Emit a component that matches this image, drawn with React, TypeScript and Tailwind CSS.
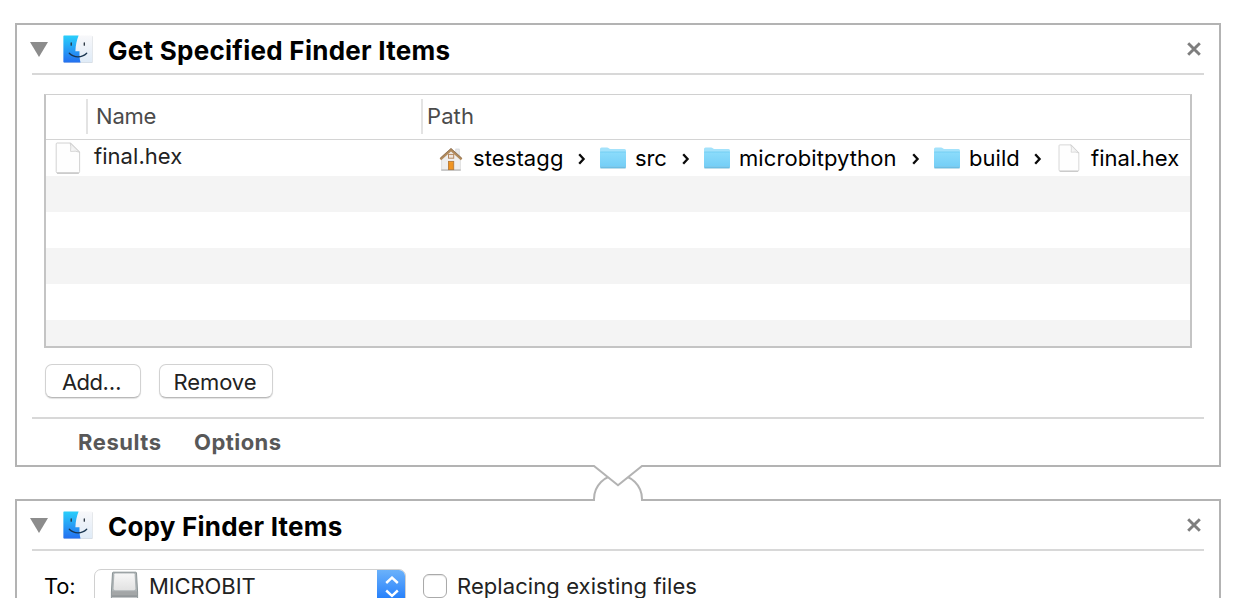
import React from "react";

function FinderIcon() {
  return (
    <svg className="block h-[30px] w-[31px] shrink-0" viewBox="0 0 31 30">
      <defs>
        <linearGradient id="finderBlue" x1="0" y1="0" x2="0" y2="1">
          <stop offset="0" stopColor="#29cffb" />
          <stop offset="1" stopColor="#2470f0" />
        </linearGradient>
        <linearGradient id="finderWhite" x1="0" y1="0" x2="0" y2="1">
          <stop offset="0" stopColor="#f8f8fa" />
          <stop offset="1" stopColor="#dfebf7" />
        </linearGradient>
      </defs>
      <rect x="0.8" y="1" width="28.8" height="27" rx="0.8" fill="#cfd3d8" />
      <rect x="0.6" y="0.4" width="28.6" height="27" rx="0.6" fill="url(#finderWhite)" />
      <path d="M1 0.4H15.6C13.8 5 12.6 10 12.4 16.2H16.5C16.4 20.3 16.6 24 17.5 27.4H1Q0.4 27.4 0.4 26.8V1Q0.4 0.4 1 0.4Z" fill="url(#finderBlue)" />
      <path d="M8.2 8V10.2M21.3 8V10.2" stroke="#25313d" strokeWidth="1.3" strokeLinecap="round" />
      <path d="M6.3 18.2Q10 21.8 15 21.8Q20 21.8 23.7 18.2" fill="none" stroke="#18344e" strokeWidth="1.3" strokeLinecap="round" />
    </svg>
  );
}

function FolderIcon() {
  return (
    <svg className="block h-[24px] w-[28px] shrink-0" viewBox="0 0 28 24">
      <defs>
        <linearGradient id="folderFront" x1="0" y1="0" x2="0" y2="1">
          <stop offset="0" stopColor="#8cdcfb" />
          <stop offset="1" stopColor="#72cdf6" />
        </linearGradient>
      </defs>
      <path d="M1 4Q1 2.5 2.5 2.5H8Q9.2 2.5 9.8 3.3Q10.3 4 11.5 4H25.5Q27 4 27 5.5V20H1Z" fill="#a3e2fb" />
      <path d="M1 7H27V22Q27 23 26 23H2Q1 23 1 22Z" fill="url(#folderFront)" />
      <path d="M1.3 7H26.7" stroke="#6ccbf3" strokeWidth="0.8" />
      <path d="M1.2 21.7H26.8" stroke="#86c5e2" strokeWidth="0.6" />
      <path d="M1.4 23H26.6" stroke="#5da9cc" strokeWidth="0.8" />
    </svg>
  );
}

function HomeIcon() {
  return (
    <svg className="mt-px block h-[26px] w-[24px] shrink-0" viewBox="0 0 24 26">
      <rect x="16.8" y="3" width="3.4" height="7" fill="#e9ebee" stroke="#c8ccd0" strokeWidth="0.6" />
      <path d="M2.6 12L12 4L21.4 12V23.8H2.6Z" fill="#efefef" stroke="#cfcfcf" strokeWidth="0.6" />
      <path d="M2.2 24.1H21.8" stroke="#a9a9a9" strokeWidth="1" />
      <path d="M1.4 13.3L12 3.8L22.6 13.3" fill="none" stroke="#b18a5c" strokeWidth="2.4" />
      <path d="M1.2 12.1L12 2.4L22.8 12.1" fill="none" stroke="#7e6246" strokeWidth="0.7" />
      <rect x="9.5" y="8.4" width="5.2" height="3.8" fill="#eee5dc" stroke="#b48861" strokeWidth="1" />
      <rect x="9.5" y="15.4" width="5.2" height="8.2" fill="#f29a28" stroke="#b77a38" strokeWidth="0.9" />
      <path d="M10.8 17V23M13.1 17V23" stroke="#e78410" strokeWidth="0.6" />
    </svg>
  );
}

function DocIcon({ className }: { className: string }) {
  return (
    <svg className={className} viewBox="0 0 26 32" preserveAspectRatio="none">
      <defs>
        <linearGradient id="docFold" x1="0" y1="1" x2="1" y2="0">
          <stop offset="0" stopColor="#ffffff" />
          <stop offset="1" stopColor="#dedede" />
        </linearGradient>
      </defs>
      <path d="M2.2 1H15.6L24.6 10V29.6Q24.6 31 23.3 31H2.6Q1.2 31 1.2 29.6V2Q1.2 1 2.2 1Z" fill="#fefefe" stroke="#cdcdcd" strokeWidth="0.9" />
      <path d="M2 31.1H23.8" stroke="#b4b4b4" strokeWidth="0.9" />
      <path d="M15.2 1Q16.2 4.5 15.6 9.4Q20.5 8.6 24.6 10.2Z" fill="url(#docFold)" stroke="#cccccc" strokeWidth="0.8" />
    </svg>
  );
}

function DriveIcon() {
  return (
    <svg className="block h-[32px] w-[30px] shrink-0" viewBox="0 0 30 32">
      <defs>
        <linearGradient id="driveTop" x1="0" y1="0" x2="0" y2="1">
          <stop offset="0" stopColor="#f7f7f7" />
          <stop offset="1" stopColor="#e2e2e2" />
        </linearGradient>
      </defs>
      <path d="M4.2 1.2H26.8Q27.4 1.2 27.5 2L28.6 21V29Q28.6 31 26.5 31H4.5Q2.4 31 2.4 29V21L3.5 2Q3.6 1.2 4.2 1.2Z" fill="#aeb4b6" stroke="#8b9496" strokeWidth="1" />
      <path d="M6.2 2.4H24.8Q25.5 2.4 25.6 3.2L26.4 17.8Q26.4 19.2 25 19.2H6Q4.6 19.2 4.6 17.8L5.4 3.2Q5.5 2.4 6.2 2.4Z" fill="url(#driveTop)" />
      <path d="M2.9 20.3H28.1V25H2.9Z" fill="#a3a6a7" />
      <path d="M2.9 25.3H28.1V31H2.9Z" fill="#c3c6c8" />
      <path d="M3 25.2H28" stroke="#7e8487" strokeWidth="1" />
    </svg>
  );
}

function Separator({ className }: { className: string }) {
  return (
    <svg className={className} viewBox="0 0 8 12">
      <path d="M1.2 1.2L5.6 6L1.2 10.8" fill="none" stroke="#0a0a0a" strokeWidth="2.3" />
    </svg>
  );
}

function ActionHeader({ title, className }: { title: string; className: string }) {
  return (
    <div className="mx-[15px] flex h-[50px] items-start border-b-2 border-[#d8d8d8]">
      <svg className="mt-[17px] -ml-[2px] block h-[15px] w-[18px] shrink-0" viewBox="0 0 18 15">
        <path d="M0 0H18L9 15Z" fill="#8c8c8c" />
      </svg>
      <div className="mt-[10px] ml-[15px]">
        <FinderIcon />
      </div>
      <h2 className={className}>{title}</h2>
      <svg className="mt-[17px] mr-[3px] ml-auto block h-[14px] w-[14px]" viewBox="0 0 14 14">
        <path d="M1.2 1.2L12.8 12.8M12.8 1.2L1.2 12.8" stroke="#7e7e7e" strokeWidth="2.9" />
      </svg>
    </div>
  );
}

function FileTable() {
  return (
    <div className="mt-[19px] ml-[27px] flex h-[254px] w-[1148px] flex-col border-2 border-t border-[#c4c4c4] border-t-[#d0d0d0] text-[22px] leading-[26px]">
      <div className="flex h-[45px] shrink-0 items-start border-b border-[#d4d4d4] pt-1 text-[#4b4b4b]">
        <div className="h-[35px] w-[42px] border-r-2 border-[#e3e3e3]" />
        <div className="h-[35px] w-[335px] border-r-2 border-[#e3e3e3] pt-[4px] pl-[8px] tracking-[-0.2px]">Name</div>
        <div className="pt-[4px] pl-[4px] tracking-[0.1px]">Path</div>
      </div>
      <div className="flex h-[36px] shrink-0 items-start">
        <DocIcon className="mt-[2px] ml-[9px] block h-[32px] w-[26px] shrink-0" />
        <div className="mt-[3px] ml-[13px] w-[345px] tracking-[0.05px] text-[#222]">final.hex</div>
        <div className="flex pt-[5px] text-black">
          <div className="flex w-[160px]">
            <HomeIcon />
            <span className="ml-[10px] w-[98px] tracking-[0.1px]">stestagg</span>
            <Separator className="mt-[8px] ml-[7px] block h-[12px] w-[8px]" />
          </div>
          <div className="flex w-[104px]">
            <FolderIcon />
            <span className="ml-[8px] w-[38px] tracking-[-0.1px]">src</span>
            <Separator className="mt-[8px] ml-[9px] block h-[12px] w-[8px]" />
          </div>
          <div className="flex w-[230px]">
            <FolderIcon />
            <span className="ml-[8px] w-[164px] tracking-[0.08px]">microbitpython</span>
            <Separator className="mt-[8px] ml-[9px] block h-[12px] w-[8px]" />
          </div>
          <div className="flex w-[125px]">
            <FolderIcon />
            <span className="ml-[8px] w-[56px] tracking-[0.05px]">build</span>
            <Separator className="mt-[8px] ml-[9px] block h-[12px] w-[8px]" />
          </div>
          <div className="flex">
            <DocIcon className="-mt-px block h-[28px] w-[22px] shrink-0" />
            <span className="ml-[11px] tracking-[0.05px]">final.hex</span>
          </div>
        </div>
      </div>
      <div className="h-[36px] shrink-0 bg-[#f4f4f4]" />
      <div className="h-[36px] shrink-0" />
      <div className="h-[36px] shrink-0 bg-[#f4f4f4]" />
      <div className="h-[36px] shrink-0" />
      <div className="flex-1 bg-[#f4f4f4]" />
    </div>
  );
}

function Connector() {
  return (
    <svg className="absolute top-[439px] left-[574px] block h-[38px] w-[54px]" viewBox="0 0 54 38">
      <path d="M3 0H51V4H3Z" fill="#fff" />
      <path d="M4 34H50V38H4Z" fill="#fff" />
      <path d="M3 37V35A24 24 0 0 1 51 35V37" fill="#fff" stroke="#b3b3b3" strokeWidth="2" />
      <path d="M3 1H51V2L27 21.3L3 2Z" fill="#fff" />
      <path d="M0 2H3L27 21.3L51 2H54" fill="none" stroke="#b3b3b3" strokeWidth="2" />
    </svg>
  );
}

const buttonClass =
  "h-[34px] rounded-[7px] border border-[#d2d2d2] border-b-[#b9b9b9] bg-white pt-[2px] text-[22px] leading-[26px] text-[#222] shadow-[0_1px_1px_rgba(0,0,0,0.12)]";

export default function App() {
  return (
    <main className="flex h-[598px] w-[1236px] flex-col overflow-hidden bg-white pt-[23px] pl-[15px] font-[Inter,'Liberation_Sans',sans-serif]">
      <section className="relative h-[444px] w-[1206px] shrink-0 border-2 border-[#b3b3b3]">
        <ActionHeader
          title="Get Specified Finder Items"
          className="mt-[10px] ml-[14px] text-[26px] leading-[32px] font-bold tracking-[0.27px] text-black"
        />
        <FileTable />
        <div className="mt-[16px] ml-[28px] flex gap-[18px]">
          <button className={buttonClass + " w-[96px] pr-[3px] tracking-[-0.5px]"}>Add…</button>
          <button className={buttonClass + " w-[114px] pr-[2px] tracking-[-0.1px]"}>Remove</button>
        </div>
        <div className="mx-[15px] mt-[19px] flex border-t-2 border-[#d8d8d8] pt-[10px] text-[22px] leading-[26px] font-bold text-[#585858]">
          <span className="ml-[46px] w-[116px] tracking-[0.55px]">Results</span>
          <span className="tracking-[0.45px]">Options</span>
        </div>
        <Connector />
      </section>
      <section className="mt-[32px] h-[200px] w-[1206px] shrink-0 border-2 border-[#b3b3b3]">
        <ActionHeader
          title="Copy Finder Items"
          className="mt-[10px] ml-[14px] text-[26px] leading-[32px] font-bold tracking-[0.22px] text-black"
        />
        <div className="mt-[18px] ml-[27px] flex text-[22px] leading-[26px] text-[#222]">
          <span className="mt-[4px] w-[50px] tracking-[-0.2px] text-black">To:</span>
          <div className="flex h-[36px] w-[312px] overflow-hidden rounded-[7px] border border-[#d0d0d0]">
            <div className="mt-[1px] ml-[14px]">
              <DriveIcon />
            </div>
            <span className="mt-[3px] ml-[10px] tracking-[-0.1px]">MICROBIT</span>
            <div className="-mt-px -mr-px ml-auto flex h-[36px] w-[29px] justify-center bg-gradient-to-b from-[#6db3fa] to-[#0f74fb]">
              <svg className="mt-[7px] block h-[22px] w-[14px]" viewBox="0 0 14 22">
                <path d="M1.2 7L7 1.6L12.8 7M1.2 14.5L7 19.9L12.8 14.5" fill="none" stroke="#fff" strokeWidth="2.4" />
              </svg>
            </div>
          </div>
          <div className="mt-[5px] ml-[17px] h-[24px] w-[24px] rounded-[6px] border border-[#aaa] bg-white shadow-[inset_0_1px_1px_rgba(0,0,0,0.1)]" />
          <span className="mt-[4px] ml-[10px] tracking-[0.08px]">Replacing existing files</span>
        </div>
      </section>
    </main>
  );
}
